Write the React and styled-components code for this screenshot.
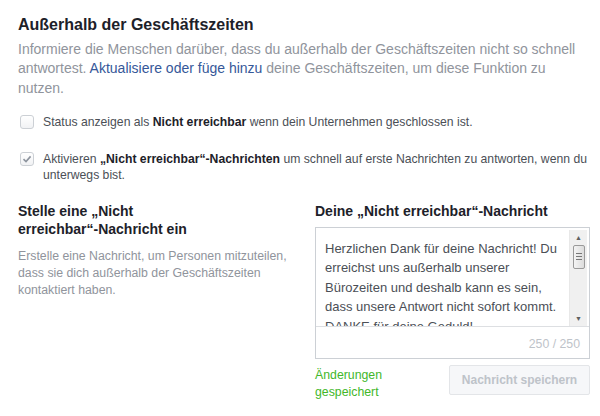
import React from 'react';
import styled, { createGlobalStyle } from 'styled-components';

const Global = createGlobalStyle`
  html, body {
    margin: 0;
    padding: 0;
    background: #fff;
  }
  body {
    font-family: "Liberation Sans", Arial, sans-serif;
    color: #1d2129;
  }
`;

const Page = styled.div`
  width: 600px;
  height: 416px;
  box-sizing: border-box;
  padding: 15px 5px 0 18px;
  overflow: hidden;
`;

const Title = styled.h2`
  margin: 0 0 5px;
  font-size: 16px;
  font-weight: bold;
  line-height: 20px;
  color: #1d2129;
`;

const Intro = styled.p`
  margin: 0 0 16px;
  font-size: 14px;
  line-height: 19.3px;
  color: #90949c;
`;

const Link = styled.a`
  color: #365899;
  text-decoration: none;
`;

const Option = styled.label`
  display: flex;
  align-items: flex-start;
  gap: 9px;
  margin-left: 2px;
  margin-bottom: ${p => p.gap || 0}px;
  font-size: 12.2px;
  line-height: 16px;
  color: #4b4f56;

  b {
    color: #1d2129;
  }
`;

const Box = styled.span`
  flex: none;
  width: 12px;
  height: 12px;
  margin-top: 1px;
  border: 1px solid #ccd0d5;
  border-radius: 3px;
  background: linear-gradient(#fff, #f1f2f4);
  display: flex;
  align-items: center;
  justify-content: center;
`;

const Columns = styled.div`
  display: grid;
  grid-template-columns: 297px 275px;
  margin-top: 19px;
`;

const Heading = styled.h3`
  margin: 0 0 ${p => p.space || 8}px;
  font-size: 14px;
  font-weight: bold;
  line-height: 18px;
  color: #1d2129;
  width: ${p => p.width || 'auto'};
`;

const Desc = styled.p`
  margin: 0;
  width: 290px;
  font-size: 12.3px;
  line-height: 17px;
  color: #90949c;
`;

const Editor = styled.div`
  border: 1px solid #ccd0d5;
  background: #fff;
`;

const TextRow = styled.div`
  display: flex;
  height: 98px;
  border-bottom: 1px solid #dddfe2;
`;

const Message = styled.div`
  flex: 1;
  padding: 11px 8px 0 9px;
  font-size: 13px;
  line-height: 19.4px;
  color: #4b4f56;
  overflow: hidden;
`;

const Scrollbar = styled.div`
  flex: none;
  width: 17px;
  margin: 2px 2px 0 0;
  background: #f0f0f0;
  border-left: 1px solid #e8e8e8;
  display: flex;
  flex-direction: column;
  align-items: center;
  font-size: 7px;
  color: #606060;
`;

const Arrow = styled.div`
  height: 15px;
  display: flex;
  align-items: center;
  justify-content: center;
`;

const Thumb = styled.div`
  width: 12px;
  height: 24px;
  box-sizing: border-box;
  border: 1px solid #9a9a9a;
  border-radius: 2px;
  background: linear-gradient(90deg, #f4f4f4, #dcdcdc);
  display: flex;
  flex-direction: column;
  align-items: center;
  justify-content: center;
  gap: 2px;

  span {
    width: 6px;
    height: 1px;
    background: #777;
  }
`;

const Counter = styled.div`
  height: 31px;
  padding: 3px 9px 0 0;
  box-sizing: border-box;
  display: flex;
  align-items: center;
  justify-content: flex-end;
  font-size: 12.3px;
  color: #bec3c9;
`;

const Footer = styled.div`
  display: flex;
  justify-content: space-between;
  align-items: flex-start;
  margin-top: 6px;
`;

const Saved = styled.div`
  margin-top: 2px;
  font-size: 12.3px;
  line-height: 17px;
  color: #42b72a;
`;

const SaveButton = styled.button`
  height: 30px;
  width: 141px;
  padding: 0;
  border: 1px solid #e3e5e8;
  border-radius: 2px;
  background: #f6f7f9;
  font-family: inherit;
  font-size: 12px;
  font-weight: bold;
  color: #bec3c9;
`;

const Check = () => (
  <svg width="10" height="10" viewBox="0 0 10 10">
    <path d="M1.5 5.2 L4 7.6 L8.6 2.4" fill="none" stroke="#8d949e" strokeWidth="1.6" />
  </svg>
);

export default function App() {
  return (
    <Page>
      <Global />
      <Title>Außerhalb der Geschäftszeiten</Title>
      <Intro>
        Informiere die Menschen darüber, dass du außerhalb der Geschäftszeiten nicht so schnell
        antwortest. <Link>Aktualisiere oder füge hinzu</Link> deine Geschäftszeiten, um diese
        Funktion zu nutzen.
      </Intro>

      <Option gap={21}>
        <Box />
        <span>
          Status anzeigen als <b>Nicht erreichbar</b> wenn dein Unternehmen geschlossen ist.
        </span>
      </Option>
      <Option>
        <Box>
          <Check />
        </Box>
        <span>
          Aktivieren <b>„Nicht erreichbar“-Nachrichten</b> um schnell auf erste Nachrichten zu
          antworten, wenn du unterwegs bist.
        </span>
      </Option>

      <Columns>
        <div>
          <Heading width="190px" space={10}>
            Stelle eine „Nicht erreichbar“-Nachricht ein
          </Heading>
          <Desc>
            Erstelle eine Nachricht, um Personen mitzuteilen, dass sie dich außerhalb der
            Geschäftszeiten kontaktiert haben.
          </Desc>
        </div>
        <div>
          <Heading space={7}>Deine „Nicht erreichbar“-Nachricht</Heading>
          <Editor>
            <TextRow>
              <Message>
                Herzlichen Dank für deine Nachricht! Du erreichst uns außerhalb unserer
                Bürozeiten und deshalb kann es sein, dass unsere Antwort nicht sofort kommt.
                DANKE für deine Geduld!
              </Message>
              <Scrollbar>
                <Arrow>▲</Arrow>
                <Thumb>
                  <span />
                  <span />
                  <span />
                </Thumb>
                <div style={{ flex: 1 }} />
                <Arrow>▼</Arrow>
              </Scrollbar>
            </TextRow>
            <Counter>250 / 250</Counter>
          </Editor>
          <Footer>
            <Saved>
              Änderungen
              <br />
              gespeichert
            </Saved>
            <SaveButton>Nachricht speichern</SaveButton>
          </Footer>
        </div>
      </Columns>
    </Page>
  );
}
